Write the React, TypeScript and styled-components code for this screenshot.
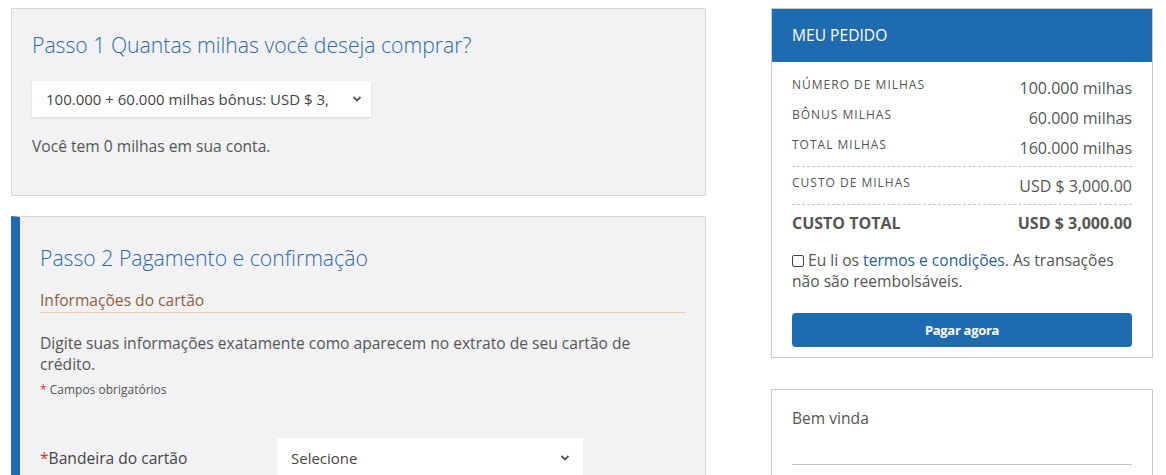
import React from 'react';
import styled, { createGlobalStyle } from 'styled-components';

const GlobalStyle = createGlobalStyle`
  html, body {
    margin: 0;
    padding: 0;
    background: #ffffff;
    font-family: 'Open Sans', 'Liberation Sans', sans-serif;
    color: #555;
  }
  * { box-sizing: border-box; }
`;

const blue = '#1f6bb0';
const body = '15.6px';

const Chevron: React.FC = () => (
  <svg width="10" height="8" viewBox="0 0 10 8">
    <path d="M1.5 2 L5 5.5 L8.5 2" fill="none" stroke="#555" strokeWidth="1.8" />
  </svg>
);

const orderRows = [
  { label: 'NÚMERO DE MILHAS', value: '100.000 milhas' },
  { label: 'BÔNUS MILHAS', value: '60.000 milhas' },
  { label: 'TOTAL MILHAS', value: '160.000 milhas' },
];

export default function App() {
  return (
    <>
      <GlobalStyle />
      <Page>
        <Main>
          <Panel>
            <StepTitle>Passo 1 Quantas milhas você deseja comprar?</StepTitle>
            <SelectBox $width={339} $height={36}>
              <SelectText>100.000 + 60.000 milhas bônus: USD $ 3,</SelectText>
              <Chevron />
            </SelectBox>
            <Note>Você tem 0 milhas em sua conta.</Note>
          </Panel>

          <Panel $active>
            <StepTitle>Passo 2 Pagamento e confirmação</StepTitle>
            <SectionTitle>Informações do cartão</SectionTitle>
            <Paragraph>
              Digite suas informações exatamente como aparecem no extrato de seu cartão de crédito.
            </Paragraph>
            <Required>
              <Star>*</Star> Campos obrigatórios
            </Required>
            <FieldRow>
              <FieldLabel>
                <Star>*</Star>Bandeira do cartão
              </FieldLabel>
              <SelectBox $width={306} $height={40} $flat>
                <SelectText>Selecione</SelectText>
                <Chevron />
              </SelectBox>
            </FieldRow>
          </Panel>
        </Main>

        <Side>
          <Card>
            <CardHeader>MEU PEDIDO</CardHeader>
            <CardBody>
              {orderRows.map(r => (
                <Row key={r.label}>
                  <RowLabel>{r.label}</RowLabel>
                  <RowValue>{r.value}</RowValue>
                </Row>
              ))}
              <Row $divider $pad="7px 0 6px">
                <RowLabel>CUSTO DE MILHAS</RowLabel>
                <RowValue>USD $ 3,000.00</RowValue>
              </Row>
              <Row $divider $pad="6px 0 0">
                <TotalText>CUSTO TOTAL</TotalText>
                <TotalText>USD $ 3,000.00</TotalText>
              </Row>
              <Terms>
                <Check />
                Eu li os <TermsLink>termos e condições</TermsLink>. As transações não são reembolsáveis.
              </Terms>
              <PayButton>Pagar agora</PayButton>
            </CardBody>
          </Card>

          <Card>
            <WelcomeBody>
              <Welcome>Bem vinda</Welcome>
              <Rule />
            </WelcomeBody>
          </Card>
        </Side>
      </Page>
    </>
  );
}

const Page = styled.div`
  display: flex;
  align-items: flex-start;
  gap: 65px;
  padding: 8px 0 0 11px;
  width: 1166px;
  height: 475px;
  overflow: hidden;
`;

const Main = styled.div`
  width: 695px;
  display: flex;
  flex-direction: column;
  gap: 20px;
`;

const Panel = styled.section<{ $active?: boolean }>`
  background: #f2f2f4;
  border: 1px solid #d9d9dc;
  border-left: ${p => (p.$active ? `9px solid ${blue}` : '1px solid #d9d9dc')};
  padding: ${p => (p.$active ? '28px 20px 40px 20px' : '23px 20px 38px 20px')};
`;

const StepTitle = styled.h2`
  margin: 0;
  font-size: 21.2px;
  line-height: 26px;
  font-weight: 300;
  color: #2d6aa6;
`;

const SelectBox = styled.div<{ $width: number; $height: number; $flat?: boolean }>`
  width: ${p => p.$width}px;
  height: ${p => p.$height}px;
  background: #fff;
  display: flex;
  align-items: center;
  justify-content: space-between;
  padding: 0 ${p => (p.$flat ? 13 : 9)}px 0 14px;
  box-shadow: ${p => (p.$flat ? 'none' : '0 1px 2px rgba(0,0,0,0.12)')};
  margin-top: ${p => (p.$flat ? 0 : 23)}px;
  flex-shrink: 0;
`;

const SelectText = styled.span`
  font-size: 15px;
  color: #444;
  white-space: nowrap;
`;

const Note = styled.p`
  margin: 19px 0 0;
  font-size: ${body};
  line-height: 21px;
  color: #555;
`;

const SectionTitle = styled.h3`
  margin: 19px 0 0;
  font-size: ${body};
  line-height: 21px;
  font-weight: 400;
  color: #8c5f3f;
  padding-bottom: 1px;
  border-bottom: 1px solid #efc9ae;
`;

const Paragraph = styled.p`
  margin: 20px 0 0;
  font-size: ${body};
  line-height: 21px;
  color: #555;
`;

const Required = styled.div`
  margin-top: 7px;
  font-size: 12px;
  line-height: 16px;
  color: #555;
`;

const Star = styled.span`
  color: #d9342b;
`;

const FieldRow = styled.div`
  display: flex;
  align-items: center;
  margin-top: 40px;
`;

const FieldLabel = styled.label`
  width: 237px;
  font-size: ${body};
  line-height: 21px;
  color: #444;
  padding-top: 1px;
`;

const Side = styled.aside`
  width: 382px;
  display: flex;
  flex-direction: column;
  gap: 31px;
`;

const Card = styled.div`
  background: #fff;
  border: 1px solid #c9c9c9;
`;

const CardHeader = styled.div`
  background: ${blue};
  color: #fff;
  font-size: ${body};
  height: 53px;
  line-height: 53px;
  padding: 0 20px;
`;

const CardBody = styled.div`
  padding: 14px 20px 10px;
`;

const Row = styled.div<{ $divider?: boolean; $pad?: string }>`
  display: flex;
  justify-content: space-between;
  align-items: flex-start;
  height: ${p => (p.$divider ? 'auto' : '30px')};
  padding: ${p => p.$pad || '0'};
  border-top: ${p => (p.$divider ? '1px dashed #c4c4c4' : 'none')};
`;

const RowLabel = styled.span`
  font-size: 12px;
  line-height: 18px;
  letter-spacing: 1px;
  color: #555;
`;

const RowValue = styled.span`
  font-size: 16px;
  line-height: 24px;
  color: #555;
`;

const TotalText = styled.span`
  font-size: 16px;
  line-height: 24px;
  font-weight: 700;
  color: #555;
`;

const Terms = styled.p`
  margin: 15px 0 0;
  font-size: ${body};
  line-height: 21px;
  color: #555;
`;

const Check = styled.span`
  display: inline-block;
  width: 12px;
  height: 12px;
  border: 1px solid #444;
  border-radius: 2px;
  margin-right: 4px;
  vertical-align: -1px;
`;

const TermsLink = styled.a`
  color: #2a5d96;
  text-decoration: none;
`;

const PayButton = styled.button`
  display: block;
  width: 100%;
  height: 34px;
  margin-top: 21px;
  border: 0;
  border-radius: 4px;
  background: ${blue};
  color: #fff;
  font-family: 'Open Sans', 'Liberation Sans', sans-serif;
  font-size: 13px;
  font-weight: 700;
  letter-spacing: -0.3px;
`;

const WelcomeBody = styled.div`
  padding: 18px 20px 20px;
`;

const Welcome = styled.div`
  font-size: ${body};
  line-height: 21px;
  color: #555;
`;

const Rule = styled.div`
  margin-top: 35px;
  border-top: 1px solid #c4c4c4;
`;
